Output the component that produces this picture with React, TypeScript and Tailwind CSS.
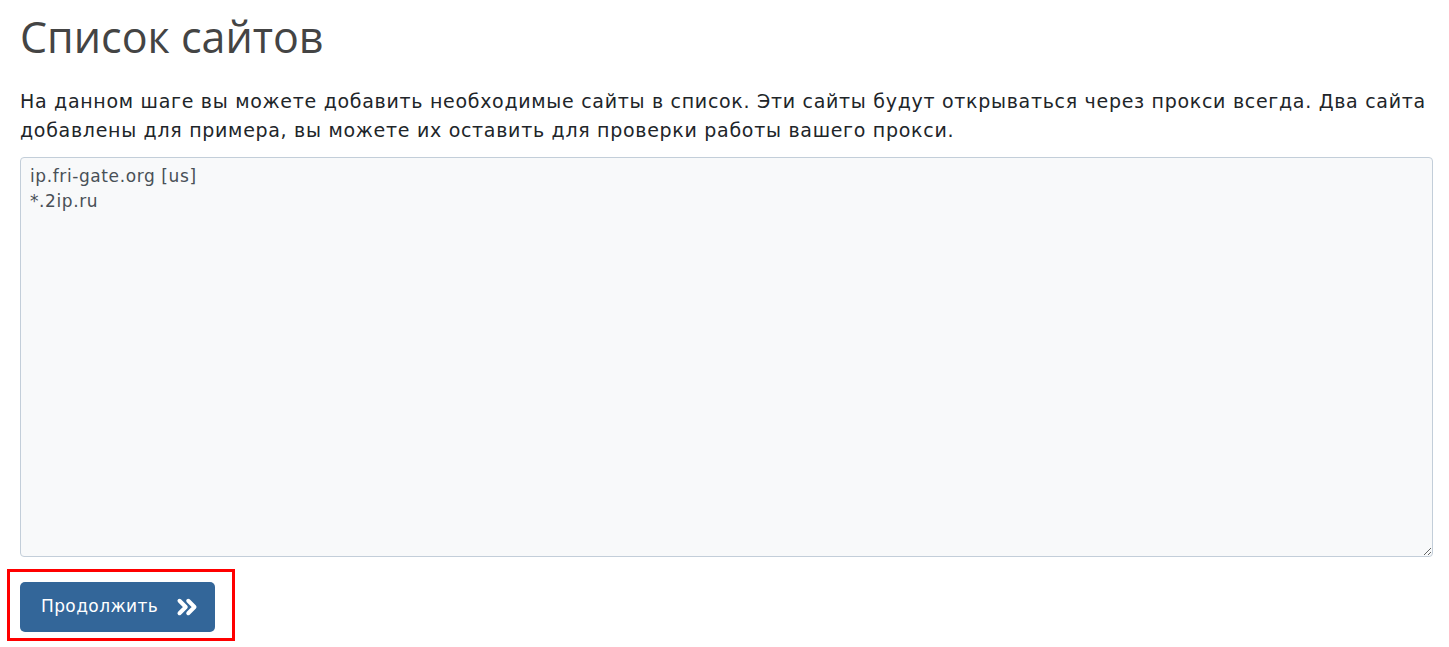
import React from 'react';
import { ChevronsRight } from 'lucide-react';

const App = () => {
  const sites = 'ip.fri-gate.org [us]\n*.2ip.ru';

  return (
    <div className="min-h-[647px] bg-white pl-5 pr-4 pt-[9px] font-['DejaVu_Sans',sans-serif] text-[#212529]">
      <h1 className="mb-[22px] font-['Open_Sans',sans-serif] text-[43px] leading-[56px] font-normal text-[#444]">Список сайтов</h1>
      <p className="mb-[12px] text-[19px] leading-[29px] tracking-[0.7px]">
        На данном шаге вы можете добавить необходимые сайты в список. Эти сайты будут открываться через прокси всегда. Два сайта
        <br />
        добавлены для примера, вы можете их оставить для проверки работы вашего прокси.
      </p>
      <textarea
        defaultValue={sites}
        className="block h-[400px] w-full resize-y rounded border border-[#c3ced9] bg-[#f8f9fa] px-[9px] py-[6px] text-[17px] leading-[25px] tracking-[0.6px] text-[#495057] outline-none"
      />
      <div className="-ml-[13px] mt-[12px] inline-block border-[3px] border-[#ff0000] pb-[6px] pl-[10px] pr-[17px] pt-[10px]">
        <button
          type="button"
          className="flex h-[50px] w-[195px] items-center gap-[14px] rounded-[5px] bg-[#336699] pl-[21px] text-[17px] tracking-[0.4px] text-white"
        >
          Продолжить
          <ChevronsRight size={30} strokeWidth={3.2} />
        </button>
      </div>
    </div>
  );
};

export default App;
